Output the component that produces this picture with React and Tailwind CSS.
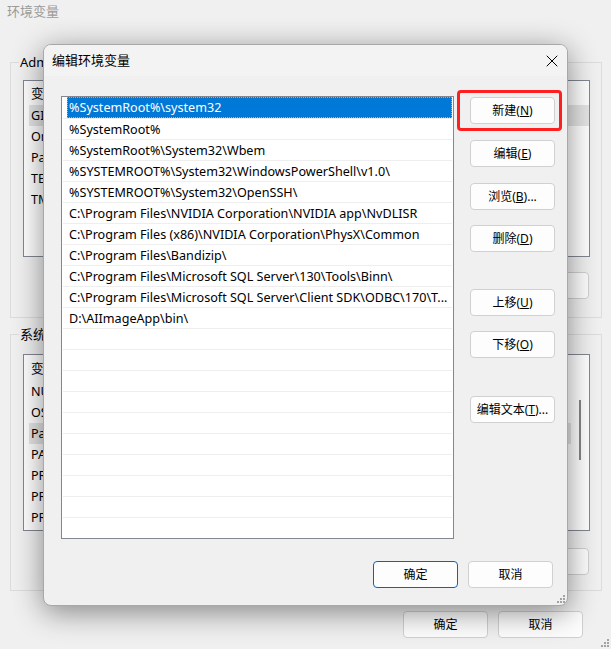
import { X } from "lucide-react";

const font = { fontFamily: '"Segoe UI", "Noto Sans", "Noto Sans CJK SC", sans-serif' };

const paths = [
  "%SystemRoot%\\system32",
  "%SystemRoot%",
  "%SystemRoot%\\System32\\Wbem",
  "%SYSTEMROOT%\\System32\\WindowsPowerShell\\v1.0\\",
  "%SYSTEMROOT%\\System32\\OpenSSH\\",
  "C:\\Program Files\\NVIDIA Corporation\\NVIDIA app\\NvDLISR",
  "C:\\Program Files (x86)\\NVIDIA Corporation\\PhysX\\Common",
  "C:\\Program Files\\Bandizip\\",
  "C:\\Program Files\\Microsoft SQL Server\\130\\Tools\\Binn\\",
  "C:\\Program Files\\Microsoft SQL Server\\Client SDK\\ODBC\\170\\T...",
  "D:\\AIImageApp\\bin\\",
];

const userVars = [
  ["GIT_HOME", "C:\\Program Files\\Git"],
  ["OneDrive", "C:\\Users\\Administrator\\OneDrive"],
  ["Path", "C:\\Users\\Administrator\\AppData\\Local\\Microsoft"],
  ["TEMP", "C:\\Users\\Administrator\\AppData\\Local\\Temp"],
  ["TMP", "C:\\Users\\Administrator\\AppData\\Local\\Temp"],
];

const sysVars = [
  ["NUMBER_OF_PROCESSORS", "16"],
  ["OS", "Windows_NT"],
  ["Path", "C:\\Windows\\system32;C:\\Windows;C:\\Windows\\System32"],
  ["PATHEXT", ".COM;.EXE;.BAT;.CMD;.VBS;.VBE;.JS;.JSE"],
  ["PROCESSOR_ARCHITECTURE", "AMD64"],
  ["PROCESSOR_IDENTIFIER", "AMD64 Family 25 Model 33 Stepping 2"],
  ["PROCESSOR_LEVEL", "25"],
];

function Btn({ children, primary, className = "" }) {
  return (
    <div
      className={`w-[85px] h-[27px] flex items-center justify-center rounded-[4px] text-[12px] text-black bg-[#fdfdfd] border ${
        primary ? "border-[#0067c0]" : "border-[#d0d0d0]"
      } ${className}`}
    >
      {children}
    </div>
  );
}

function Grip() {
  return (
    <svg width="9" height="9" viewBox="0 0 9 9">
      {[
        [7, 1],
        [7, 4],
        [4, 4],
        [7, 7],
        [4, 7],
        [1, 7],
      ].map(([x, y], i) => (
        <rect key={i} x={x - 1} y={y - 1} width="2" height="2" fill="#a3a3a3" />
      ))}
    </svg>
  );
}

function VarList({ rows, header, selected, scroll }) {
  return (
    <div className="flex bg-white border border-[#828790] h-[177px] overflow-hidden">
      <div className="flex-1 flex flex-col text-[12.6px] text-black">
        <div className={`flex items-center ${header} pl-[7px] pt-[3px]`}>
          <span className="w-[150px]">变量</span>
          <span>值</span>
        </div>
        {rows.map(([k, v], i) => (
          <div key={k} className="h-[21px] flex">
            <div
              className={`flex-1 ml-[5px] pl-[2px] pt-[2px] flex items-center whitespace-nowrap overflow-hidden ${
                i === selected ? "bg-[#e5e5e5]" : ""
              }`}
            >
              <span className="w-[150px] shrink-0">{k}</span>
              <span className="w-[360px] overflow-hidden">{v}</span>
            </div>
          </div>
        ))}
      </div>
      {scroll && (
        <div className="w-[18px] flex justify-center pt-[45px]">
          <div className="w-[2px] h-[60px] bg-[#858585]" />
        </div>
      )}
    </div>
  );
}

function Group({ title, children, className = "" }) {
  return (
    <div className={`relative ml-[10px] mr-[9px] border border-[#dcdcdc] ${className}`}>
      <span className="absolute -top-[10px] left-[8px] bg-[#f0f0f0] px-[1px] text-[13px] text-black leading-[18px]">
        {title}
      </span>
      {children}
    </div>
  );
}

export default function App() {
  return (
    <div className="relative w-[611px] h-[649px] bg-[#f0f0f0] overflow-hidden select-none" style={font}>
      {/* background window */}
      <div className="flex flex-col">
        <div className="h-[22px] pl-[7px] pt-[2px] text-[13px] text-[#9a9a9a]">环境变量</div>

        <Group title="Administrator 的用户变量(U)" className="mt-[40px] h-[256px] pt-[17px] pl-[12px] pr-[11px]">
          <div className="h-[176px]">
            <VarList rows={userVars} header="h-[24px]" selected={0} />
          </div>
          <div className="flex justify-end gap-[10px] pr-[1px] mt-[16px]">
            <Btn>新建(N)...</Btn>
            <Btn>编辑(I)...</Btn>
            <Btn>删除(D)</Btn>
          </div>
        </Group>

        <Group title="系统变量(S)" className="mt-[16px] h-[257px] pt-[19px] pl-[12px] pr-[11px]">
          <VarList rows={sysVars} header="h-[26px]" selected={2} scroll />
          <div className="flex justify-end gap-[10px] pr-[1px] mt-[17px]">
            <Btn>新建(W)...</Btn>
            <Btn>编辑(I)...</Btn>
            <Btn>删除(L)</Btn>
          </div>
        </Group>

        <div className="flex justify-end gap-[10px] pr-[28px] mt-[20px]">
          <Btn>确定</Btn>
          <Btn>取消</Btn>
        </div>
      </div>
      <div className="absolute right-[1px] bottom-[1px]">
        <Grip />
      </div>

      {/* edit dialog */}
      <div className="absolute left-[43px] top-[44px] w-[525px] h-[562px] rounded-[8px] border border-[#a8a8a8] bg-[#f0f0f0] shadow-[0_6px_30px_rgba(0,0,0,0.45)] flex flex-col overflow-hidden">
        <div className="h-[31px] shrink-0 bg-[#f3f3f3] flex items-center justify-between pl-[8px] pr-[5px]">
          <span className="text-[13px] text-black">编辑环境变量</span>
          <X size={20} strokeWidth={1.2} className="text-black" />
        </div>

        <div className="flex pt-[20px] pl-[17px]">
          <div className="w-[393px] h-[443px] bg-white border border-[#828790] flex flex-col overflow-hidden text-[12.6px] text-black">
            {Array.from({ length: 21 }).map((_, i) => (
              <div key={i} className={`h-[21px] shrink-0 mx-[1px] flex ${i > 0 ? "border-t border-[#eeeeee]" : ""}`}>
                {i === 0 ? (
                  <div className="flex-1 ml-[4px] bg-[#0078d7] text-white border border-dotted border-[#f0a040] flex items-center pl-[1px] pt-[2px] whitespace-nowrap">
                    {paths[i]}
                  </div>
                ) : (
                  <div className="flex-1 ml-[4px] pl-[2px] pt-[2px] flex items-center whitespace-nowrap overflow-hidden">
                    {paths[i] || ""}
                  </div>
                )}
              </div>
            ))}
          </div>

          <div className="flex flex-col ml-[16px] pt-[1px]">
            <Btn>新建(<u>N</u>)</Btn>
            <Btn className="mt-[16px]">编辑(<u>E</u>)</Btn>
            <Btn className="mt-[16px]">浏览(<u>B</u>)...</Btn>
            <Btn className="mt-[15px]">删除(<u>D</u>)</Btn>
            <Btn className="mt-[37px]">上移(<u>U</u>)</Btn>
            <Btn className="mt-[15px]">下移(<u>O</u>)</Btn>
            <Btn className="mt-[38px]">编辑文本(<u>T</u>)...</Btn>
          </div>
        </div>

        <div className="flex justify-end gap-[10px] pr-[14px] mt-[22px]">
          <Btn primary>确定</Btn>
          <Btn>取消</Btn>
        </div>

        <div className="absolute right-[1px] bottom-[1px]">
          <Grip />
        </div>
      </div>

      {/* highlight annotation */}
      <div className="absolute left-[457px] top-[90px] w-[105px] h-[41px] rounded-[4px] border-[3px] border-[#ff1f1f]" />
    </div>
  );
}
